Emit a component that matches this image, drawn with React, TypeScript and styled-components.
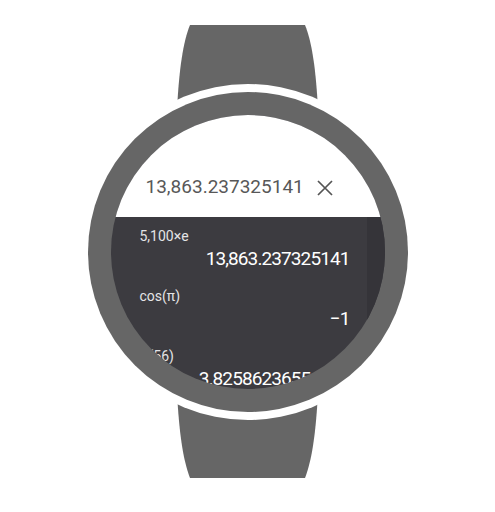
import React from "react";
import styled, { createGlobalStyle } from "styled-components";

const Global = createGlobalStyle`
  html, body { margin: 0; padding: 0; background: #ffffff; }
  body { font-family: Roboto, "Noto Sans", "Liberation Sans", sans-serif; }
  * { box-sizing: border-box; }
`;

const Stage = styled.div`
  position: relative;
  width: 495px;
  height: 512px;
  display: flex;
  justify-content: center;
  align-items: flex-start;
  padding-top: 84px;
  overflow: hidden;
`;

const Strap = styled.svg`
  position: absolute;
  left: 0;
  top: 0;
  width: 495px;
  height: 512px;
`;

const Ring = styled.div`
  position: relative;
  width: 336px;
  height: 336px;
  border-radius: 50%;
  background: #ffffff;
  padding: 8px;
`;

const Bezel = styled.div`
  width: 320px;
  height: 320px;
  border-radius: 50%;
  background: #666666;
  display: flex;
  align-items: center;
  justify-content: center;
`;

const Screen = styled.div`
  width: 274px;
  height: 274px;
  border-radius: 50%;
  overflow: hidden;
  background: #3c3b40;
  display: flex;
  flex-direction: column;
`;

const Header = styled.div`
  flex: 0 0 102px;
  background: #ffffff;
  display: flex;
  align-items: flex-start;
  gap: 13px;
  padding: 60px 0 0 35px;
`;

const HeaderValue = styled.span`
  font-size: 19px;
  line-height: 24px;
  color: #585858;
  white-space: nowrap;
`;

const ClearButton = styled.svg`
  width: 16px;
  height: 16px;
  margin-top: 5px;
  flex: 0 0 auto;
`;

const List = styled.div`
  flex: 1;
  display: flex;
`;

const Column = styled.div`
  flex: 1;
  display: flex;
  flex-direction: column;
  padding-left: 29px;
  padding-right: 17px;
`;

const ScrollStripe = styled.div`
  flex: 0 0 18px;
  background: #353439;
`;

const Row = styled.div`
  height: 60px;
  display: flex;
  flex-direction: column;
  padding-top: 11px;
  gap: 4px;
`;

const Expr = styled.div`
  font-size: 14px;
  line-height: 16px;
  color: #e4e4e6;
  white-space: nowrap;
`;

const Result = styled.div`
  font-size: 19px;
  line-height: 22px;
  color: #ffffff;
  text-align: right;
  white-space: nowrap;
  letter-spacing: -0.9px;
`;

const rows = [
  { expr: "5,100×e", result: "13,863.237325141" },
  { expr: "cos(π)", result: "−1" },
  { expr: "∛(56)", result: "3.82586236554478" },
];

export default function App() {
  return (
    <>
      <Global />
      <Stage>
        <Strap viewBox="0 0 495 512">
          <path
            d="M190 25 L305 25 C312 42 316 70 318 110 L318 392 C316 432 312 460 305 478 L190 478 C183 460 179 432 177 392 L177 110 C179 70 183 42 190 25 Z"
            fill="#666666"
          />
        </Strap>
        <Ring>
          <Bezel>
            <Screen>
              <Header>
                <HeaderValue>13,863.237325141</HeaderValue>
                <ClearButton viewBox="0 0 16 16">
                  <path d="M1 1 L15 15 M15 1 L1 15" stroke="#555555" strokeWidth="1.7" fill="none" />
                </ClearButton>
              </Header>
              <List>
                <Column>
                  {rows.map((r) => (
                    <Row key={r.expr}>
                      <Expr>{r.expr}</Expr>
                      <Result>{r.result}</Result>
                    </Row>
                  ))}
                </Column>
                <ScrollStripe />
              </List>
            </Screen>
          </Bezel>
        </Ring>
      </Stage>
    </>
  );
}
